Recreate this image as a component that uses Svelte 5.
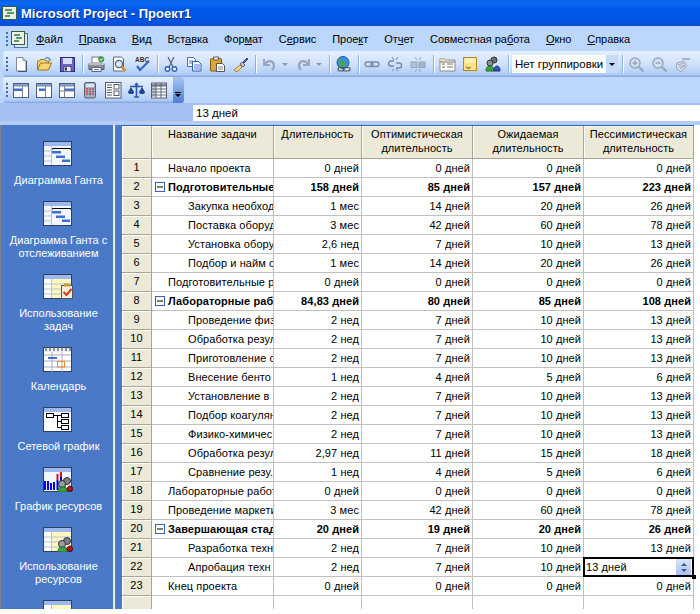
<script lang="ts">
  const menu = [
    ['', 'Ф', 'айл'], ['', 'П', 'равка'], ['', 'В', 'ид'], ['Вст', 'а', 'вка'], ['Фор', 'м', 'ат'],
    ['С', 'е', 'рвис'], ['Прое', 'к', 'т'], ['От', 'ч', 'ет'], ['Совместная ра', 'б', 'ота'],
    ['', 'О', 'кно'], ['', 'С', 'правка']
  ];

  const ICONS: Record<string, string> = {
    new: '<path d="M3.5 1.5h6.5l3 3v10.5h-9.5z" fill="#fff" stroke="#7d8aa5"/><path d="M10 1.5v3h3" fill="#dfe6f2" stroke="#7d8aa5"/><path d="M13.5 5v10.5H5" fill="none" stroke="#44506e"/>',
    open: '<path d="M1.5 14V5h2l1-1.500h4l1 1.500h3v2" fill="#f6d67c" stroke="#9a7420"/><path d="M1.500 14l3-7h11l-3 7z" fill="#fbd470" stroke="#9a7420"/><path d="M9 3C10 1 13 1 14 3.500" fill="none" stroke="#5d7fb5" stroke-width="1.200"/><path d="M12.500 3.500h3l-1.500 1.800z" fill="#5d7fb5"/>',
    save: '<rect x="1.500" y="1.500" width="14" height="14" fill="#6a62c4" stroke="#2f2a78"/><rect x="4" y="2" width="9" height="6" fill="#dcdcf4"/><rect x="5" y="10.500" width="7" height="5" fill="#ececf4" stroke="#2f2a78" stroke-width=".6"/><rect x="6" y="11.500" width="2" height="3" fill="#333"/>',
    print: '<rect x="4" y="1" width="9" height="6" fill="#fff" stroke="#778"/><path d="M1 7.500h15v6H1z" fill="#8c8f99" stroke="#50535c"/><rect x="1" y="7" width="15" height="2" fill="#b9bcc5"/><rect x="4" y="11.500" width="9" height="4" fill="#fff" stroke="#667"/><rect x="6" y="13" width="5" height="1" fill="#4a79c8"/><circle cx="13.200" cy="3.200" r="3" fill="#3d9a3d"/><path d="M11.700 3.200l1.200 1.200 2-2.200" fill="none" stroke="#fff" stroke-width="1"/>',
    preview: '<path d="M2.500 1h8l2 2v12h-10z" fill="#fff" stroke="#667"/><circle cx="8" cy="8" r="3.600" fill="#d9e9fb" stroke="#4e5d78" stroke-width="1.200"/><path d="M10.500 10.800l4 4" stroke="#d98a20" stroke-width="2.400"/>',
    spell: '<text x="1" y="6" font-size="6.500" font-weight="700" font-family="Liberation Sans,sans-serif" fill="#333">ABC</text><path d="M3 10l3 4 9-9" fill="none" stroke="#3f6cb8" stroke-width="2.400"/>',
    cut: '<path d="M5 1l5 10M11 1L6 11" stroke="#5c6478" stroke-width="1.200"/><circle cx="4.500" cy="13" r="2.200" fill="#fff" stroke="#2f5fb0" stroke-width="1.400"/><circle cx="11.500" cy="13" r="2.200" fill="#fff" stroke="#2f5fb0" stroke-width="1.400"/>',
    copy: '<path d="M1.500 1.500h6l2 2v7h-8z" fill="#fff" stroke="#4a6ea8"/><path d="M6.500 5.500h6l2.500 2.500v7h-8.500z" fill="#fff" stroke="#2f5fb0"/><path d="M8 9h6M8 11h6M8 13h6M3 5h4M3 7h3" stroke="#4a79c8"/>',
    paste: '<rect x="1.500" y="2.500" width="11" height="12.500" rx="1" fill="#e3a531" stroke="#7a5a14"/><rect x="4.500" y="1" width="5" height="3" fill="#e8e4d4" stroke="#666"/><path d="M7.500 7.500h6l2 2v6h-8z" fill="#fff" stroke="#555"/><path d="M9 11h5M9 13h5" stroke="#888"/>',
    brush: '<path d="M8 9L2 14l3 2 5-5z" fill="#f0d483" stroke="#a48332"/><path d="M8 8l3 3 2-2-3-3z" fill="#c8c8d0" stroke="#667"/><path d="M11 6l4-4 1 1-4 4z" fill="#5e6f96" stroke="#3a4668"/>',
    undo: '<path d="M3 3v6h6" fill="none" stroke="#9aa7bd" stroke-width="2"/><path d="M4 8c3-4 8-4 9 1 .3 2-1 4-2 5" fill="none" stroke="#9aa7bd" stroke-width="2.400"/>',
    redo: '<path d="M14 3v6H8" fill="none" stroke="#9aa7bd" stroke-width="2"/><path d="M13 8C10 4 5 4 4 9c-.3 2 1 4 2 5" fill="none" stroke="#9aa7bd" stroke-width="2.400"/>',
    globe: '<circle cx="8" cy="6.500" r="6" fill="#3d8fd8" stroke="#20608f"/><path d="M4 3c3 0 3 3 5 3s1 4-1 6c-1-3-4-2-4-5z" fill="#4aa848"/><rect x="3" y="11.500" width="6" height="3.500" rx="1.700" fill="none" stroke="#555" stroke-width="1.200"/><rect x="8" y="11.500" width="7" height="3.500" rx="1.700" fill="none" stroke="#555" stroke-width="1.200"/>',
    link: '<rect x="1" y="6" width="8" height="4.500" rx="2.200" fill="none" stroke="#7b8aa5" stroke-width="1.400"/><rect x="7" y="6" width="8" height="4.500" rx="2.200" fill="none" stroke="#7b8aa5" stroke-width="1.400"/>',
    unlink: '<path d="M7 5H4a2.500 2.500 0 0 0 0 5h3M9 7h3a2.500 2.500 0 0 1 0 5H9" fill="none" stroke="#7b8aa5" stroke-width="1.400"/><path d="M5 1l2 3M11 1L9 4M5 15l2-2M11 15l-2-2" stroke="#7b8aa5"/>',
    split: '<rect x="1" y="6" width="6" height="5.500" fill="#b4bfd2" stroke="#97a4bb"/><rect x="9" y="6" width="6" height="5.500" fill="#a5b2c8" stroke="#97a4bb"/><path d="M5 1l2 3M11 1L9 4M5 16l2-3M11 16l-2-3" stroke="#97a4bb"/>',
    info: '<path d="M1 3h5l1 1h9v11H1z" fill="#fdfdf8" stroke="#8a8a88"/><path d="M1 3.500h6v2H1z" fill="#f2dfa0"/><path d="M3 8h3M3 11h3M8 8h6M8 11h6M1 6h15" stroke="#777"/>',
    note: '<rect x="1.500" y="1.500" width="13" height="13" fill="#fce38a" stroke="#b28a24"/><path d="M3 2h11v5H3z" fill="#fdeeb2"/><path d="M4 11l3 1.500 1.500-1.500" fill="none" stroke="#b07a18" stroke-width="1.400"/>',
    people: '<circle cx="9" cy="4" r="3" fill="#6c7078" stroke="#333"/><circle cx="5" cy="7" r="3" fill="#8d8f94" stroke="#333"/><path d="M1 15c0-4 2-5 4-5s4 1 4 5z" fill="#3ea043" stroke="#1f6a25"/><path d="M9 15c0-4 2-5 3-5s3 1 3 5z" fill="#2f55c4" stroke="#1b2f80"/>',
    zoomin: '<circle cx="7" cy="7" r="5" fill="#d5e0f2" stroke="#98a5bb" stroke-width="1.400"/><path d="M4.500 7h5M7 4.500v5" stroke="#98a5bb" stroke-width="1.400"/><path d="M11 11l4.500 4.500" stroke="#98a5bb" stroke-width="2.200"/>',
    zoomout: '<circle cx="7" cy="7" r="5" fill="#d5e0f2" stroke="#98a5bb" stroke-width="1.400"/><path d="M4.500 7h5" stroke="#98a5bb" stroke-width="1.400"/><path d="M11 11l4.500 4.500" stroke="#98a5bb" stroke-width="2.200"/>',
    goto: '<path d="M8 2h8v2H8z" fill="#a5b1c5"/><path d="M3 7l7-2 3 5-6 6-5-4z" fill="#d9dfe9" stroke="#9aa5b9"/><path d="M4 9l6-2M5 11l6-2M6 13l5-3" stroke="#9aa5b9"/>',
    t1: '<rect x=".5" y="1.500" width="15" height="14" fill="#fff" stroke="#555d72"/><rect x="1" y="2" width="14" height="2" fill="#7d9fe0"/><rect x="1" y="6.500" width="8" height="2.500" fill="#3d6fd0"/><path d="M9.500 4v11M1 4h14" stroke="#7e8699"/>',
    t2: '<rect x=".5" y="1.500" width="15" height="14" fill="#fff" stroke="#555d72"/><rect x="1" y="2" width="14" height="2" fill="#7d9fe0"/><rect x="3" y="6.500" width="6.500" height="2.500" fill="#3d6fd0"/><path d="M9.500 4v11M1 4h14" stroke="#7e8699"/>',
    t3: '<rect x=".5" y="1.500" width="15" height="14" fill="#fff" stroke="#555d72"/><rect x="1" y="2" width="14" height="2" fill="#7d9fe0"/><rect x="6" y="6.500" width="9" height="2.500" fill="#3d6fd0"/><path d="M5.500 4v11M1 4h14M1 9h14" stroke="#7e8699"/>',
    calc: '<rect x="2.500" y=".5" width="11" height="15.500" rx="1.500" fill="#a6adbd" stroke="#596071"/><rect x="4" y="2" width="8" height="3" fill="#d8e6f8"/><path d="M4 7h2M7 7h2M10 7h2M4 9.500h2M7 9.500h2M4 12h2M7 12h2M10 12h2" stroke="#d2453a" stroke-width="1.300"/><path d="M10 9.500h2M7 12h2" stroke="#3d6fd0" stroke-width="1.300"/>',
    form: '<rect x=".5" y=".5" width="15.500" height="15.500" fill="#fff" stroke="#555d72"/><path d="M2 3h5M2 5.500h5M2 8h5M2 10.500h5M2 13h5" stroke="#555d72"/><rect x="9" y="2.500" width="5" height="4.500" fill="#fff" stroke="#555d72"/><rect x="9" y="9" width="5" height="4.500" fill="#fff" stroke="#555d72"/>',
    scale: '<path d="M8.500 1v14M6 15h5M2 4.500h13" stroke="#2f5aa8" stroke-width="1.600"/><path d="M8.500 .5l-2.500 3h5z" fill="#2f5aa8"/><path d="M0 10a3 2 0 0 0 6 0l-3-5zM11 10a3 2 0 0 0 6 0l-3-5z" fill="#1e4890"/>',
    table: '<rect x=".5" y="1" width="15" height="15" fill="#fff" stroke="#555d72"/><rect x="1" y="1.500" width="14" height="2.500" fill="#8a92a3"/><rect x="1" y="4" width="4" height="11.500" fill="#c5cad5"/><path d="M1 4h14M1 7h14M1 10h14M1 13h14M5 1v15M10 1v15" stroke="#555d72" stroke-width=".9"/>'
  };

  const toolbar1 = [
    ['new', 'open', 'save'], ['print', 'preview', 'spell'], ['cut', 'copy', 'paste', 'brush']
  ];
  const toolbar2 = ['t1', 't2', 't3', 'calc', 'form', 'scale', 'table'];

  const views = [
    { kind: 'gantt', label: 'Диаграмма Ганта' },
    { kind: 'gantt', label: 'Диаграмма Ганта с отслеживанием' },
    { kind: 'usage', label: 'Использование задач' },
    { kind: 'calendar', label: 'Календарь' },
    { kind: 'network', label: 'Сетевой график' },
    { kind: 'graph', label: 'График ресурсов' },
    { kind: 'resuse', label: 'Использование ресурсов' },
    { kind: 'sheet', label: '' }
  ];

  // level: 0 summary, 1 plain, 2 indented
  const rows = [
    [1, 'Начало проекта', '0 дней', 0, 0, 0],
    [0, 'Подготовительные', '158 дней', 85, 157, 223],
    [2, 'Закупка необход', '1 мес', 14, 20, 26],
    [2, 'Поставка оборуд', '3 мес', 42, 60, 78],
    [2, 'Установка обору', '2,6 нед', 7, 10, 13],
    [2, 'Подбор и найм с', '1 мес', 14, 20, 26],
    [1, 'Подготовительные р', '0 дней', 0, 0, 0],
    [0, 'Лабораторные раб', '84,83 дней', 80, 85, 108],
    [2, 'Проведение физ', '2 нед', 7, 10, 13],
    [2, 'Обработка резул', '2 нед', 7, 10, 13],
    [2, 'Приготовление с', '2 нед', 7, 10, 13],
    [2, 'Внесение бенто', '1 нед', 4, 5, 6],
    [2, 'Установление в', '2 нед', 7, 10, 13],
    [2, 'Подбор коагулян', '2 нед', 7, 10, 13],
    [2, 'Физико-химичес', '2 нед', 7, 10, 13],
    [2, 'Обработка резул', '2,97 нед', 11, 15, 18],
    [2, 'Сравнение резу.', '1 нед', 4, 5, 6],
    [1, 'Лабораторные работ', '0 дней', 0, 0, 0],
    [1, 'Проведение маркети', '3 мес', 42, 60, 78],
    [0, 'Завершающая стад', '20 дней', 19, 20, 26],
    [2, 'Разработка техн', '2 нед', 7, 10, 13],
    [2, 'Апробация техн', '2 нед', 7, 10, 13],
    [1, 'Кнец проекта', '0 дней', 0, 0, 0]
  ] as [number, string, string, number, number, number][];

  const EDIT_ROW = 21;
</script>

{#snippet ico(name: string)}
  <span class="btn"><svg width="17" height="17" viewBox="0 0 17 17">{@html ICONS[name]}</svg></span>
{/snippet}

{#snippet viewIcon(kind: string)}
  <svg width="30" height="25" viewBox="0 0 30 25">
    <rect x=".5" y=".5" width="28" height="24" fill="#fff" stroke="#2e3f66"/>
    <rect x="1" y="1" width="27" height="4" fill={kind === 'calendar' ? '#e8edf6' : '#9db8ee'}/>
    {#if kind === 'calendar'}
      <path d="M3 0v4M7 0v4M11 0v4M15 0v4M19 0v4M23 0v4M27 0v4" stroke="#555" stroke-width="1.200"/>
      <path d="M1 8h27M1 14h27M1 20h27M9 5v20M19 5v20" stroke="#aab" />
      <rect x="5" y="10" width="9" height="2" fill="#3d6fd0"/>
      <rect x="14.500" y="14.500" width="7" height="5.500" fill="none" stroke="#f08a18"/>
    {:else if kind === 'network'}
      <g fill="#fff" stroke="#000">
        <rect x="3.500" y="6.500" width="7" height="4"/><rect x="18.500" y="6.500" width="7" height="4"/>
        <rect x="18.500" y="12.500" width="7" height="4"/><rect x="18.500" y="18.500" width="7" height="4"/>
        <path d="M10.500 8.500h8M14.500 8.500v12h4M14.500 14.500h4" fill="none"/>
      </g>
    {:else if kind === 'graph' || kind === 'gantt'}
      <rect x="1" y="5" width="27" height="19" fill="#f2f6fd"/>
      {#if kind === 'gantt'}
        <path d="M1 10h8M1 15h8M1 20h8M8.500 5v19" stroke="#b9c2d4"/>
        <path d="M9.500 8.500v-1h18v1" fill="none" stroke="#000"/>
        <rect x="9" y="10" width="9" height="2.500" fill="#3d6fd0"/>
        <rect x="13" y="14.500" width="9" height="2.500" fill="#3d6fd0"/>
        <rect x="19" y="18.500" width="8" height="2.500" fill="#3d6fd0"/>
      {:else}
        <path d="M2 23v-9M5 23V14M8 23V16M11 23v-8M14.500 23V13M18 23V10M21.500 23V12" stroke="#0000e0" stroke-width="2"/>
        <path d="M14.500 13V7M18 10V5" stroke="#e01010" stroke-width="2"/>
      {/if}
    {:else}
      <rect x="8" y="5" width="20" height="19" fill="#fdf8c0"/>
      <path d="M1 10h27M1 15h27M1 20h27M8.500 5v19" stroke="#b9c2d4"/>
    {/if}
    {#if kind === 'usage'}
      <rect x="18.500" y="11.500" width="11" height="13" fill="#f1eee0" stroke="#555"/>
      <rect x="21" y="9.500" width="6" height="3" fill="#c89a3a"/>
      <path d="M20.500 18l3 3 5-6" fill="none" stroke="#d8382a" stroke-width="2"/>
    {:else if kind === 'graph' || kind === 'resuse'}
      <circle cx="24" cy="14" r="3.500" fill="#7c7f85" stroke="#333"/>
      <circle cx="19" cy="17" r="3.500" fill="#9a9da2" stroke="#333"/>
      <path d="M15 25c0-5 3-5 5-5s4 0 4 5z" fill="#3ea043" stroke="#1f6a25"/>
      <path d="M24 23c0-3 2-4 3-4s3 1 3 4l-3 1z" fill="#b01818" stroke="#600"/>
    {/if}
  </svg>
{/snippet}

<div class="window">
  <header class="titlebar">
    <svg class="app-icon" width="16" height="16" viewBox="0 0 16 16">
      <rect x=".5" y="1.500" width="14" height="13" fill="#e9efe4" stroke="#3a5a44"/>
      <path d="M3 5h7M5 8h7M3 11h5" stroke="#2c7a4a" stroke-width="1.400"/>
    </svg>
    <span class="title">Microsoft Project - Проект1</span>
  </header>

  <nav class="menubar">
    <span class="grip"></span>
    <svg class="doc-icon" width="18" height="18" viewBox="0 0 18 18">
      <rect x="4.500" y="3.500" width="13" height="14" fill="#dde7f8" stroke="#4a6ea8"/>
      <rect x="1.500" y="1.500" width="13" height="13" fill="#eef3e6" stroke="#3a5a44"/>
      <path d="M4 5h6M6 8h6M4 11h5" stroke="#2c7a4a" stroke-width="1.400"/>
    </svg>
    {#each menu as [a, u, b]}
      <span class="menu-item">{a}<u>{u}</u>{b}</span>
    {/each}
  </nav>

  <div class="toolbar">
    <span class="grip"></span>
    {#each toolbar1 as group}
      {#each group as name}{@render ico(name)}{/each}
      <span class="sep"></span>
    {/each}
    {@render ico('undo')}<span class="drop"></span>
    {@render ico('redo')}<span class="drop"></span>
    <span class="sep"></span>
    {@render ico('globe')}
    <span class="sep"></span>
    {@render ico('link')}{@render ico('unlink')}{@render ico('split')}
    <span class="sep"></span>
    {@render ico('info')}{@render ico('note')}{@render ico('people')}
    <span class="sep"></span>
    <span class="combo">
      <span class="combo-text">Нет группировки</span>
      <span class="combo-arrow"></span>
    </span>
    <span class="sep"></span>
    {@render ico('zoomin')}{@render ico('zoomout')}{@render ico('goto')}
  </div>

  <div class="toolbar short">
    <span class="grip"></span>
    {#each toolbar2 as name}{@render ico(name)}{/each}
    <span class="more"></span>
  </div>

  <div class="entrybar">
    <div class="entry">13 дней</div>
  </div>
  <div class="entry-gap"></div>

  <main class="main">
    <aside class="viewbar">
      {#each views as v}
        <div class="view">
          {@render viewIcon(v.kind)}
          <span>{v.label}</span>
        </div>
      {/each}
    </aside>
    <div class="splitter"></div>
    <div class="split-blue"></div>

    <table class="grid">
      <colgroup>
        <col style="width:30px" /><col style="width:122px" /><col style="width:88px" />
        <col style="width:111px" /><col style="width:111px" /><col style="width:110px" />
      </colgroup>
      <thead>
        <tr>
          <th></th>
          <th class="name-head">Название задачи</th>
          <th>Длительность</th>
          <th>Оптимистическая длительность</th>
          <th>Ожидаемая длительность</th>
          <th>Пессимистическая длительность</th>
        </tr>
      </thead>
      <tbody>
        {#each rows as r, i}
          <tr class:summary={r[0] === 0}>
            <td class="rownum">{i + 1}</td>
            <td class="name">
              <div class="name-inner" class:indent={r[0] === 2}>
                {#if r[0] === 0}<span class="toggle"></span>{/if}
                <span class="name-text">{r[1]}</span>
              </div>
            </td>
            <td class="num">{r[2]}</td>
            <td class="num">{r[3]} дней</td>
            <td class="num">{r[4]} дней</td>
            {#if i === EDIT_ROW}
              <td class="num edit-cell">
                <div class="editor">
                  <span>{r[5]} дней</span>
                  <span class="spin"><i class="up"></i><i class="down"></i></span>
                </div>
                <span class="handle"></span>
              </td>
            {:else}
              <td class="num">{r[5]} дней</td>
            {/if}
          </tr>
        {/each}
        <tr><td class="rownum"></td><td></td><td></td><td></td><td></td><td></td></tr>
      </tbody>
    </table>
  </main>
</div>

<style>
  :global(body) {
    background: #fff;
  }

  .window {
    height: 609px;
    overflow: hidden;
    display: flex;
    flex-direction: column;
    font-family: 'Liberation Sans', Arial, sans-serif;
    font-size: 11px;
    color: #000;
    background: #bcd7fd;
  }

  .titlebar {
    height: 26px;
    flex: none;
    display: flex;
    align-items: center;
    gap: 3px;
    padding-left: 2px;
    background: linear-gradient(180deg, #0a5fe6 0%, #0b6af2 12%, #0058e8 35%, #0054e3 80%, #0a4fd0 100%);
  }

  .title {
    color: #fff;
    font-size: 13px;
    font-weight: 700;
    text-shadow: 1px 1px 0 #0a2f8a;
  }

  .menubar {
    height: 25px;
    flex: none;
    display: flex;
    align-items: center;
    padding-left: 5px;
    font-size: 11px;
    letter-spacing: -.05px;
  }

  .menu-item {
    padding: 0 8px;
    white-space: nowrap;
  }

  .grip {
    width: 2px;
    height: 14px;
    margin: 0 2px 0 1px;
    flex: none;
    background: repeating-linear-gradient(180deg, #3a6ea5 0 2px, transparent 2px 4px);
  }

  .toolbar {
    height: 26px;
    flex: none;
    display: flex;
    align-items: center;
    padding-left: 2px;
    box-sizing: border-box;
    margin-left: 3px;
    border-radius: 3px 0 0 3px;
    background: linear-gradient(180deg, #e4f0fe 0%, #cfe1fb 50%, #b0ccf5 90%, #7fa4e0 100%);
  }

  .toolbar.short {
    width: 181px;
    border-radius: 3px;
  }

  .btn {
    width: 23px;
    height: 22px;
    flex: none;
    display: flex;
    align-items: center;
    justify-content: center;
  }

  .sep {
    width: 1px;
    height: 18px;
    flex: none;
    margin: 0 2.5px;
    background: #8cafe3;
    box-shadow: 1px 0 0 #fff;
  }

  .drop {
    width: 0;
    height: 0;
    margin: 0 4px 0 1px;
    flex: none;
    border: 3px solid transparent;
    border-top: 3px solid #8a97ad;
    border-bottom: 0;
    box-sizing: content-box;
  }

  .combo {
    width: 106px;
    height: 18px;
    flex: none;
    display: flex;
    align-items: center;
    background: #fff;
    margin: 0 1px;
  }

  .combo-text {
    flex: 1;
    padding-left: 3px;
    font-size: 11.5px;
    white-space: nowrap;
  }

  .combo-arrow {
    width: 12px;
    height: 18px;
    position: relative;
    background: #c4dcfc;
  }

  .combo-arrow::after {
    content: '';
    position: absolute;
    left: 3px;
    top: 8px;
    border: 3px solid transparent;
    border-top-color: #000;
    border-bottom: 0;
  }

  .more {
    width: 11px;
    height: 26px;
    margin-left: auto;
    position: relative;
    border-radius: 0 3px 3px 0;
    background: linear-gradient(180deg, #a9c4f2, #4f7fd0);
  }

  .more::before {
    content: '';
    position: absolute;
    left: 2px;
    top: 15px;
    width: 6px;
    height: 1px;
    background: #000;
  }

  .more::after {
    content: '';
    position: absolute;
    left: 2px;
    top: 17px;
    border: 3px solid transparent;
    border-top-color: #000;
    border-bottom: 0;
  }

  .entrybar {
    height: 18px;
    flex: none;
    box-sizing: border-box;
    padding: 2px 0 0 193px;
    background: #a4bff1;
  }

  .entry {
    height: 16px;
    line-height: 16px;
    padding-left: 3px;
    background: #fff;
    font-size: 11.5px;
  }

  .entry-gap {
    height: 4px;
    flex: none;
    background: #b3cdf7;
  }

  .main {
    flex: 1;
    min-height: 0;
    display: flex;
    align-items: flex-start;
    background: #fff;
  }

  .viewbar {
    width: 112px;
    height: 484px;
    flex: none;
    box-sizing: border-box;
    overflow: hidden;
    margin-left: 1px;
    padding-top: 16px;
    display: flex;
    flex-direction: column;
    align-items: center;
    gap: 13px;
    background: #4a79c8;
    box-shadow: -1px 0 0 #808080;
  }

  .view {
    width: 100%;
    flex: none;
    display: flex;
    flex-direction: column;
    align-items: center;
    gap: 8px;
    padding-bottom: 1px;
    color: #fff;
    text-align: center;
    line-height: 13px;
    font-size: 11px;
  }

  .view span {
    padding: 0 3px 0 6px;
  }

  .view svg {
    display: block;
    margin-left: 1px;
  }

  .splitter {
    width: 3px;
    height: 484px;
    flex: none;
    background: #ece9d8;
    box-shadow: inset -1px 0 0 #808080;
  }

  .split-blue {
    width: 6px;
    height: 484px;
    flex: none;
    background: #4a79c8;
  }

  .grid {
    table-layout: fixed;
    width: 572px;
    flex: none;
    border-collapse: separate;
    border-spacing: 0;
    margin-top: 1px;
    font-size: 11px;
    letter-spacing: .08px;
    box-shadow: 0 -1px 0 #2b5fb8;
  }

  th {
    height: 33px;
    box-sizing: border-box;
    padding: 1px 2px 0;
    vertical-align: top;
    font-weight: 400;
    line-height: 14px;
    text-align: center;
    background: #ece9d8;
    border-right: 1px solid #a8a594;
    border-bottom: 1px solid #a8a594;
    box-shadow: inset 1px 1px 0 #fff;
  }

  .name-head {
    padding-left: 16px;
    text-align: left;
  }

  td {
    height: 19px;
    box-sizing: border-box;
    padding: 0 2px;
    border-right: 1px solid #c0c0c0;
    border-bottom: 1px solid #c0c0c0;
    white-space: nowrap;
    overflow: hidden;
    line-height: 18px;
  }

  .rownum {
    text-align: center;
    background: #ece9d8;
    border-right: 1px solid #a8a594;
    border-bottom: 1px solid #a8a594;
    box-shadow: inset 1px 1px 0 #fff;
    line-height: 17px;
    vertical-align: top;
  }

  .num {
    text-align: right;
  }

  .summary td {
    font-weight: 700;
  }

  .summary .rownum {
    font-weight: 400;
  }

  .name {
    padding: 0 0 0 2px;
  }

  .name-inner {
    display: flex;
    align-items: center;
    padding-left: 14px;
    overflow: hidden;
  }

  .name-inner.indent {
    padding-left: 34px;
  }

  .summary .name-inner {
    padding-left: 1px;
  }

  .name-text {
    white-space: nowrap;
  }

  .toggle {
    width: 8px;
    height: 8px;
    flex: none;
    margin-right: 3px;
    position: relative;
    background: #fff;
    border: 1px solid #3d5fc0;
  }

  .toggle::after {
    content: '';
    position: absolute;
    left: 1px;
    right: 1px;
    top: 3px;
    height: 2px;
    background: #000;
    transform: scaleY(.5);
  }

  .edit-cell {
    position: relative;
    overflow: visible;
  }

  .editor {
    position: absolute;
    inset: -1px -1px -1px -1px;
    display: flex;
    align-items: center;
    padding-left: 1px;
    text-align: left;
    background: #fff;
    border: 2px solid #000;
    box-sizing: border-box;
  }

  .editor span:first-child {
    flex: 1;
  }

  .spin {
    width: 15px;
    height: 16px;
    flex: none;
    margin-right: 1px;
    display: flex;
    flex-direction: column;
    align-items: center;
    justify-content: center;
    gap: 3px;
    background: linear-gradient(180deg, #d8e5fc, #a9c1f0);
    box-sizing: border-box;
  }

  .spin i {
    display: block;
    border: 3px solid transparent;
    border-top: 0;
    border-bottom-color: #38568f;
  }

  .spin i.down {
    border-bottom: 0;
    border-top: 3px solid #38568f;
  }

  .handle {
    position: absolute;
    right: -3px;
    bottom: -3px;
    width: 4px;
    height: 4px;
    background: #000;
    z-index: 1;
  }
</style>
